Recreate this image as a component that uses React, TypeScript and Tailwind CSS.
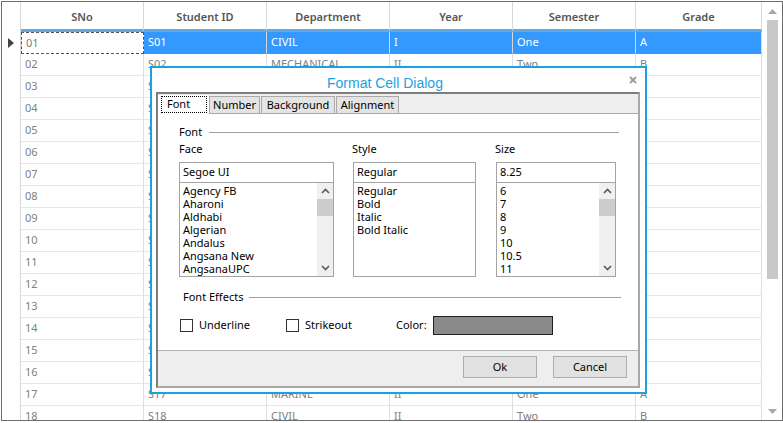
import React from "react";

type Row = { sno: string; id: string; dept: string; year: string; sem: string; grade: string };

const depts = [
  "CIVIL", "MECHANICAL", "EEE", "ECE", "CSE", "IT", "CIVIL", "MECHANICAL", "EEE",
  "ECE", "CSE", "IT", "CIVIL", "MECHANICAL", "EEE", "ECE", "MARINE", "CIVIL",
];
const years = ["I", "II", "III", "IV", "I", "II", "III", "IV", "I", "II", "III", "IV", "I", "II", "III", "IV", "II", "II"];

const rows: Row[] = depts.map((dept, i) => {
  const n = String(i + 1).padStart(2, "0");
  return {
    sno: n,
    id: `S${n}`,
    dept,
    year: years[i],
    sem: i % 2 === 0 ? "One" : "Two",
    grade: i % 2 === 0 ? "A" : "B",
  };
});

const headers = ["SNo", "Student ID", "Department", "Year", "Semester", "Grade"];

function colWidth(i: number) {
  return i === 5 ? "w-[126px]" : "w-[123px]";
}

function Chevron({ down }: { down?: boolean }) {
  return (
    <svg width="9" height="6" viewBox="0 0 9 6" aria-hidden="true">
      <polyline
        points={down ? "1,1 4.5,4.5 8,1" : "1,5 4.5,1.5 8,5"}
        fill="none"
        stroke="#5a5a5a"
        strokeWidth="1.6"
      />
    </svg>
  );
}

function ListScroll() {
  return (
    <div className="flex w-[16px] shrink-0 flex-col bg-[#f0f0f0]">
      <div className="flex h-[16px] items-center justify-center">
        <Chevron />
      </div>
      <div className="h-[17px] bg-[#cdcdcd]" />
      <div className="flex-1" />
      <div className="flex h-[16px] items-center justify-center">
        <Chevron down />
      </div>
    </div>
  );
}

function Picker({
  width,
  value,
  items,
  scroll,
}: {
  width: string;
  value: string;
  items: string[];
  scroll?: boolean;
}) {
  return (
    <div className={`${width} flex flex-col`}>
      <div className="flex h-[21px] items-center border border-[#a3a3a3] pl-[3px]">{value}</div>
      <div className="flex h-[94px] border-x border-b border-[#a3a3a3]">
        <div className="flex-1 overflow-hidden pl-[3px] pt-[1px] leading-[13px]">
          {items.map((it) => (
            <div key={it}>{it}</div>
          ))}
        </div>
        {scroll ? <ListScroll /> : null}
      </div>
    </div>
  );
}

function FormatCellDialog() {
  return (
    <div className="absolute left-[150px] top-[66px] h-[328px] w-[497px] border-2 border-[#1ba1e2] bg-white text-[11px] text-black">
      <div className="relative h-[24px] pl-[175px] pt-[7px]">
        <span className="font-['Liberation_Sans',Arial,sans-serif] text-[14px] leading-[16px] text-[#1ba1e2]">
          Format Cell Dialog
        </span>
        <svg className="absolute right-[8px] top-[8px]" width="8" height="8" viewBox="0 0 8 8" aria-hidden="true">
          <path d="M1 1 L7 7 M7 1 L1 7" stroke="#9a9a9a" strokeWidth="1.8" />
        </svg>
      </div>

      <div className="ml-[4px] flex h-[296px] w-[484px] flex-col border-2 border-b-[#a8a8a8] border-l-[#7d7d7d] border-r-[#a8a8a8] border-t-[#7d7d7d]">
        {/* tab strip */}
        <div className="flex h-[20px] items-end border-b border-[#a9a9a9] bg-[#eeeeee]">
          <div className="mb-[-1px] h-[19px] w-[51px] bg-white pl-[3px] pt-[1px]">
            <div className="h-[17px] w-[46px] border border-dotted border-black pl-[5px] leading-[14px]">Font</div>
          </div>
          <div className="flex h-[17px] w-[51px] items-center justify-center border-x border-t border-[#a9a9a9] bg-[#e4e4e4]">
            Number
          </div>
          <div className="ml-[1px] flex h-[17px] w-[74px] items-center justify-center border-x border-t border-[#a9a9a9] bg-[#e4e4e4]">
            Background
          </div>
          <div className="ml-[1px] flex h-[17px] w-[63px] items-center justify-center border-x border-t border-[#a9a9a9] bg-[#e4e4e4]">
            Alignment
          </div>
        </div>

        {/* font page */}
        <div className="flex h-[236px] flex-col pl-[21px] pr-[19px] pt-[12px]">
          <div className="flex h-[13px] items-center">
            <span>Font</span>
            <div className="ml-[7px] h-px flex-1 bg-[#a0a0a0]" />
          </div>
          <div className="mt-[4px] flex h-[13px] items-center">
            <span className="w-[173px]">Face</span>
            <span className="w-[143px]">Style</span>
            <span>Size</span>
          </div>
          <div className="mt-[6px] flex">
            <Picker
              width="w-[155px]"
              value="Segoe UI"
              items={["Agency FB", "Aharoni", "Aldhabi", "Algerian", "Andalus", "Angsana New", "AngsanaUPC", "Aparajita"]}
              scroll
            />
            <div className="ml-[19px]">
              <Picker width="w-[123px]" value="Regular" items={["Regular", "Bold", "Italic", "Bold Italic"]} />
            </div>
            <div className="ml-[20px]">
              <Picker width="w-[120px]" value="8.25" items={["6", "7", "8", "9", "10", "10.5", "11", "12"]} scroll />
            </div>
          </div>
          <div className="mt-[14px] flex h-[13px] items-center pl-[4px]">
            <span>Font Effects</span>
            <div className="ml-[6px] mr-[-2px] h-px flex-1 bg-[#a0a0a0]" />
          </div>
          <div className="mt-[12px] flex h-[19px] items-center pl-[1px]">
            <div className="flex w-[106px] items-center">
              <div className="h-[13px] w-[13px] border border-[#333333] bg-white" />
              <span className="ml-[6px]">Underline</span>
            </div>
            <div className="flex w-[110px] items-center">
              <div className="h-[13px] w-[13px] border border-[#333333] bg-white" />
              <span className="ml-[6px]">Strikeout</span>
            </div>
            <span className="w-[37px]">Color:</span>
            <div className="h-[19px] w-[120px] border border-[#1e1e1e] bg-[#8a8a8a]" />
          </div>
        </div>

        {/* footer */}
        <div className="flex flex-1 items-start justify-end border-t border-[#b4b4b4] bg-[#eeeeee] pr-[11px] pt-[5px]">
          <button className="flex h-[22px] w-[74px] items-center justify-center border border-[#adadad] bg-[#e1e1e1]">
            Ok
          </button>
          <button className="ml-[16px] flex h-[22px] w-[74px] items-center justify-center border border-[#adadad] bg-[#e1e1e1]">
            Cancel
          </button>
        </div>
      </div>
    </div>
  );
}

export default function App() {
  return (
    <div className="relative h-[423px] w-[783px] overflow-hidden bg-white font-['Noto_Sans',sans-serif]">
      <div className="ml-px mt-px flex h-[420px] w-[782px] border border-[#6e6e6e]">
        <div className="flex w-[760px] flex-col overflow-hidden">
          {/* header */}
          <div className="flex h-[30px] shrink-0">
            <div className="w-[19px] border-r border-[#d8d8d8]" />
            {headers.map((h, i) => (
              <div
                key={h}
                className={`${colWidth(i)} flex items-center justify-center border-b-[3px] border-r border-b-[#63a8de] border-r-[#d8d8d8] pt-[3px] text-[11px] font-semibold text-[#555555]`}
              >
                {h}
              </div>
            ))}
          </div>
          {/* rows */}
          {rows.map((r, idx) => {
            const sel = idx === 0;
            const cells = [r.sno, r.id, r.dept, r.year, r.sem, r.grade];
            return (
              <div key={r.sno} className="flex h-[22px] shrink-0 text-[11px]">
                <div className="flex w-[19px] items-center border-r border-[#d8d8d8] pl-[6px]">
                  {sel ? (
                    <svg width="7" height="10" viewBox="0 0 7 10" aria-hidden="true">
                      <polygon points="0,0 6,5 0,10" fill="#444444" />
                    </svg>
                  ) : null}
                </div>
                {cells.map((c, i) => {
                  if (sel && i === 0) {
                    return (
                      <div
                        key={i}
                        className={`${colWidth(i)} flex items-center border border-dashed border-[#555555] pl-[4px] text-[#808080]`}
                      >
                        {c}
                      </div>
                    );
                  }
                  return (
                    <div
                      key={i}
                      className={`${colWidth(i)} flex items-center border-b border-r pl-[4px] ${
                        sel
                          ? "border-b-[#3399ff] border-r-[#d8d8d8] bg-[#3399ff] text-white"
                          : "border-b-[#e6e6e6] border-r-[#dedede] text-[#808080]"
                      }`}
                    >
                      {c}
                    </div>
                  );
                })}
              </div>
            );
          })}
        </div>
        {/* grid scrollbar */}
        <div className="flex w-[20px] flex-col items-center bg-white">
          <div className="flex h-[18px] items-center justify-center">
            <svg width="9" height="5" viewBox="0 0 9 5" aria-hidden="true">
              <polygon points="0,5 4.5,0 9,5" fill="#a8a8a8" />
            </svg>
          </div>
          <div className="h-[259px] w-[11px] bg-[#c8c8c8]" />
          <div className="flex-1" />
          <div className="flex h-[18px] items-center justify-center">
            <svg width="9" height="5" viewBox="0 0 9 5" aria-hidden="true">
              <polygon points="0,0 4.5,5 9,0" fill="#a8a8a8" />
            </svg>
          </div>
        </div>
      </div>
      <FormatCellDialog />
    </div>
  );
}
